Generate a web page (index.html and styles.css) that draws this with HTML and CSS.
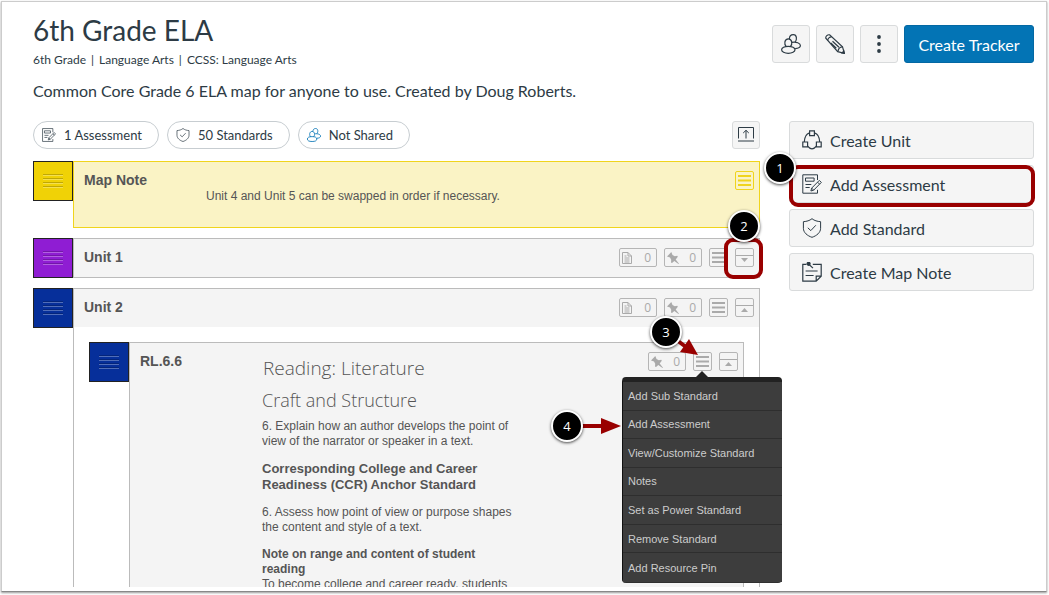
FILE: index.html
```html
<!DOCTYPE html>
<html lang="en">
<head>
  <meta charset="UTF-8" />
  <meta name="viewport" content="width=device-width, initial-scale=1.0"/>
  <title>6th Grade ELA</title>
  <link rel="stylesheet" href="styles.css">
</head>
<body>
  <svg class="sprite" aria-hidden="true">
    <symbol id="i-people" viewBox="0 0 20 20">
      <g fill="none" stroke="currentColor" stroke-width="1.200">
        <ellipse cx="7.300" cy="15.800" rx="6.700" ry="3.500"/>
        <path d="M5.300 12.600C2.800 10.500 3.400 4.900 7.300 4.900s4.500 5.600 2 7.700"/>
        <path d="M8.400 5C8.400 2.400 10 .7 12.300.7c3.800 0 3.900 5.400 1.700 7.400"/>
        <path d="M10.800 8.400c4.500-.8 8.600.8 8.600 3.200 0 1.900-2.200 2.900-5.300 3"/>
      </g>
    </symbol>
    <symbol id="i-pencil" viewBox="0 0 20 20">
      <g fill="none" stroke="currentColor" stroke-width="1.200">
        <path d="M.8 4.200C.5 2.200 2.500.4 4.600.8L17.500 12.700l1.800 6.600-6.600-1.600z"/>
        <path d="M2.800 6.400C2.600 4.600 4.800 2.600 6.600 2.800M13 17.500c.2-2.400 2-4.600 4.500-4.700M7.500 7.200l6.500 6M5.800 9l5.500 5.200"/>
        <path d="M17 19l2.300.3-.5-2.200z" fill="currentColor"/>
      </g>
    </symbol>
    <symbol id="i-dots" viewBox="0 0 20 20">
      <g fill="currentColor"><circle cx="10" cy="3" r="1.900"/><circle cx="10" cy="10" r="1.900"/><circle cx="10" cy="17" r="1.900"/></g>
    </symbol>
    <symbol id="i-assess" viewBox="0 0 20 20">
      <g fill="none" stroke="currentColor">
        <path d="M15.500 6V.8H.8v18.400h14.700v-3.400M3.500 4h8.600v3.200H3.500zM3.500 10.500h5.800M3.500 13.500h4.200"/>
        <path d="M17.300 6.400l2 2-7.600 7.800-2.800.8.800-2.900zM15.600 8.200l2 2M9.700 14.100l2 2.100"/>
      </g>
    </symbol>
    <symbol id="i-shield" viewBox="0 0 20 20">
      <g fill="none" stroke="currentColor">
        <path d="M10 .7c2.500 2 5.200 2.700 8.600 3v6.600c0 4.300-4 7.500-8.600 9-4.600-1.500-8.600-4.700-8.600-9V3.700C4.800 3.400 7.500 2.700 10 .7z"/>
        <path d="M5.800 9.800l3 2.800 5-5.300"/>
      </g>
    </symbol>
    <symbol id="i-unit" viewBox="0 0 20 20">
      <g fill="none" stroke="currentColor" stroke-width="1.200">
        <path d="M7.600.8h4.800v4.800H7.600zM.8 12h4.800v4.800H.8zM14.400 12h4.800v4.800h-4.800z"/>
        <path d="M7.600 2.800C4.500 3.700 2.500 6.500 2.300 12M12.400 2.800c3.100.9 5.100 3.700 5.300 9.200M5.600 16.200c2.800 3.600 6 3.600 8.800 0"/>
      </g>
    </symbol>
    <symbol id="i-note" viewBox="0 0 20 20">
      <g fill="none" stroke="currentColor" stroke-width="1.200">
        <path d="M4.500 2.400H.8v16.800h13.400l5-5V2.400h-8.400M14.200 19.200v-5h5M3.600 9h12M3.600 13.500h8"/>
        <path d="M6 1.500l5 4.600"/><circle cx="6.600" cy="1.800" r="1.500" fill="currentColor"/>
      </g>
    </symbol>
    <symbol id="i-export" viewBox="0 0 16 16">
      <path d="M.5 11.500v-11h15v11M0 14h16M8 11.500V3.500M5.200 6L8 3.300 10.800 6" fill="none" stroke="currentColor"/>
    </symbol>
    <symbol id="i-doc" viewBox="0 0 12 12">
      <path d="M.5.5H6l3.500 3.500v7.500h-9zM6 .5V4h3.500M2.500 4h2M2.500 6h5M2.500 8h5M2.500 10h5" fill="none" stroke="currentColor"/>
    </symbol>
    <symbol id="i-pin" viewBox="0 0 12 12">
      <path d="M4.300 0L5.500 3l2.300 1.200 2.500-.4.500 1L8.700 7.500 12 11.700 11.500 12 7.300 9 5 11l-1-.4.200-2.900L3 5.500 0 4.600z" fill="currentColor"/>
    </symbol>
    <symbol id="i-list" viewBox="0 0 13 13">
      <path d="M0 2h13M0 6.500h13M0 11h13" stroke="currentColor" stroke-width="2"/>
    </symbol>
    <symbol id="i-down" viewBox="0 0 17 17">
      <path d="M0 6.500h17" stroke="currentColor"/><path d="M5 9h7l-3.500 4z" fill="currentColor"/>
    </symbol>
    <symbol id="i-up" viewBox="0 0 17 17">
      <path d="M0 6.500h17" stroke="currentColor"/><path d="M5 13h7L8.500 9z" fill="currentColor"/>
    </symbol>
  </svg>

  <div class="page">
    <header class="header">
      <div>
        <h1>6th Grade ELA</h1>
        <div class="meta"><span>6th Grade</span><span>|</span><span>Language Arts</span><span>|</span><span>CCSS: Language Arts</span></div>
        <p class="description">Common Core Grade 6 ELA map for anyone to use. Created by Doug Roberts.</p>
      </div>
      <div class="actions">
        <button class="btn square" aria-label="Share"><svg><use href="#i-people"/></svg></button>
        <button class="btn square" aria-label="Edit"><svg><use href="#i-pencil"/></svg></button>
        <button class="btn square" aria-label="More options"><svg><use href="#i-dots"/></svg></button>
        <button class="btn primary">Create Tracker</button>
      </div>
    </header>

    <div class="columns">
      <main class="map">
        <div class="summary">
          <button class="pill"><svg><use href="#i-assess"/></svg>1 Assessment</button>
          <button class="pill"><svg><use href="#i-shield"/></svg>50 Standards</button>
          <button class="pill shared"><svg><use href="#i-people"/></svg>Not Shared</button>
          <button class="btn export" aria-label="Collapse all"><svg><use href="#i-export"/></svg></button>
        </div>

        <section class="item note">
          <button class="handle" aria-label="Move Map Note"><i></i><i></i><i></i><i></i></button>
          <div class="box">
            <div class="bar">
              <h2>Map Note</h2>
              <div class="tools"><button class="tool" aria-label="Menu"><svg class="list"><use href="#i-list"/></svg></button></div>
            </div>
            <p class="note-text">Unit 4 and Unit 5 can be swapped in order if necessary.</p>
          </div>
        </section>

        <section class="item purple">
          <button class="handle" aria-label="Move Unit 1"><i></i><i></i><i></i><i></i></button>
          <div class="box">
            <div class="bar">
              <h2>Unit 1</h2>
              <div class="tools">
                <button class="tool count" aria-label="Documents"><svg><use href="#i-doc"/></svg>0</button>
                <button class="tool count" aria-label="Pins"><svg><use href="#i-pin"/></svg>0</button>
                <button class="tool" aria-label="Menu"><svg class="list"><use href="#i-list"/></svg></button>
                <div class="anchor">
                  <button class="tool" aria-label="Expand"><svg class="toggle"><use href="#i-down"/></svg></button>
                  <span class="marker marker-toggle"></span>
                  <span class="step step-2">2</span>
                </div>
              </div>
            </div>
          </div>
        </section>

        <section class="item blue">
          <button class="handle" aria-label="Move Unit 2"><i></i><i></i><i></i><i></i></button>
          <div class="box open">
            <div class="bar">
              <h2>Unit 2</h2>
              <div class="tools">
                <button class="tool count" aria-label="Documents"><svg><use href="#i-doc"/></svg>0</button>
                <button class="tool count" aria-label="Pins"><svg><use href="#i-pin"/></svg>0</button>
                <button class="tool" aria-label="Menu"><svg class="list"><use href="#i-list"/></svg></button>
                <button class="tool" aria-label="Collapse"><svg class="toggle"><use href="#i-up"/></svg></button>
              </div>
            </div>

            <section class="item blue nested">
              <button class="handle" aria-label="Move RL.6.6"><i></i><i></i><i></i><i></i></button>
              <div class="box">
                <div class="bar">
                  <h2>RL.6.6</h2>
                  <div class="tools">
                    <button class="tool count" aria-label="Pins"><svg><use href="#i-pin"/></svg>0</button>
                    <div class="anchor">
                      <button class="tool" aria-label="Menu" aria-expanded="true"><svg class="list"><use href="#i-list"/></svg></button>
                      <div class="menu">
                        <button>Add Sub Standard</button>
                        <button>Add Assessment</button>
                        <button>View/Customize Standard</button>
                        <button>Notes</button>
                        <button>Set as Power Standard</button>
                        <button>Remove Standard</button>
                        <button>Add Resource Pin</button>
                      </div>
                      <svg class="arrow arrow-3" viewBox="0 0 24 20"><path d="M3 3l8 6" stroke="#990000" stroke-width="4"/><path d="M14 1L23 17 5 14z" fill="#990000"/></svg>
                      <span class="step step-3">3</span>
                      <svg class="arrow arrow-4" viewBox="0 0 40 16"><path d="M0 8h22" stroke="#990000" stroke-width="4"/><path d="M20 0l20 8-20 8z" fill="#990000"/></svg>
                      <span class="step step-4">4</span>
                    </div>
                    <button class="tool" aria-label="Collapse"><svg class="toggle"><use href="#i-up"/></svg></button>
                  </div>
                </div>
                <div class="standard">
                  <h3 class="subject">Reading: Literature</h3>
                  <h3>Craft and Structure</h3>
                  <p class="lead">6. Explain how an author develops the point of view of the narrator or speaker in a text.</p>
                  <h4>Corresponding College and Career Readiness (CCR) Anchor Standard</h4>
                  <p>6. Assess how point of view or purpose shapes the content and style of a text.</p>
                  <p><b>Note on range and content of student reading</b><br>To become college and career ready, students</p>
                </div>
              </div>
            </section>
          </div>
        </section>
      </main>

      <aside class="sidebar">
        <button class="btn wide"><svg><use href="#i-unit"/></svg>Create Unit</button>
        <div class="anchor">
          <button class="btn wide"><svg><use href="#i-assess"/></svg>Add Assessment</button>
          <span class="marker marker-side"></span>
          <span class="step step-1">1</span>
        </div>
        <button class="btn wide"><svg><use href="#i-shield"/></svg>Add Standard</button>
        <button class="btn wide"><svg><use href="#i-note"/></svg>Create Map Note</button>
      </aside>
    </div>
  </div>
</body>
</html>
```
FILE: styles.css
```css
* {
  box-sizing: border-box;
}
body {
  margin: 0;
  padding: 1px 2px 3px 1px;
  height: 100vh;
  overflow: hidden;
  background: #fff;
  color: #2d3b45;
  font-family: Lato, sans-serif;
}
button {
  font-family: inherit;
  color: inherit;
  cursor: pointer;
}
h1, h2, h3, h4, p {
  margin: 0;
}
.sprite {
  position: absolute;
  width: 0;
  height: 0;
}
.page {
  height: 100%;
  display: flex;
  flex-direction: column;
  padding: 11px 12px 4px 31px;
  border: 1px solid #ccc;
  border-bottom-color: #888;
  box-shadow: 0 1px 2px #999;
}

/* header */
.header {
  display: flex;
  justify-content: space-between;
  align-items: flex-start;
}
h1 {
  font-size: 28px;
  line-height: 34px;
  font-weight: 400;
}
.meta {
  display: flex;
  gap: 5px;
  margin-top: 4px;
  font-size: 12px;
  line-height: 18px;
}
.description {
  margin-top: 10px;
  font-size: 16px;
  line-height: 24px;
}
.actions {
  display: flex;
  gap: 6px;
  margin-top: 12px;
}
.btn {
  display: flex;
  align-items: center;
  justify-content: center;
  height: 38px;
  padding: 0;
  background: #f5f5f5;
  border: 1px solid #d9dbdc;
  border-radius: 3px;
  font-size: 16px;
}
.btn svg {
  width: 20px;
  height: 20px;
}
.square {
  width: 38px;
}
.primary {
  width: 130px;
  background: #0374b5;
  border-color: #0368a3;
  color: #fff;
}

/* columns */
.columns {
  flex: 1;
  min-height: 0;
  display: flex;
  gap: 29px;
  margin: 0 -12px 0 -31px;
  padding: 18px 12px 0 31px;
  overflow: hidden;
}
.map {
  flex: 1;
}
.sidebar {
  width: 245px;
  display: flex;
  flex-direction: column;
  gap: 6px;
}
.wide {
  width: 100%;
  flex-shrink: 0;
  justify-content: flex-start;
  gap: 8px;
  padding: 0 12px;
}
.summary {
  display: flex;
  gap: 8px;
  margin-bottom: 12px;
}
.pill {
  display: flex;
  align-items: center;
  gap: 8px;
  height: 28px;
  padding: 0 16px 0 8px;
  background: #fff;
  border: 1px solid #c7cdd1;
  border-radius: 14px;
  font-size: 13px;
}
.pill svg {
  width: 14px;
  height: 14px;
}
.shared svg {
  color: #0374b5;
}
.export {
  width: 28px;
  height: 28px;
  margin-left: auto;
}
.export svg {
  width: 16px;
  height: 16px;
}

/* map items */
.item {
  display: flex;
  align-items: flex-start;
  margin-bottom: 10px;
  font-family: "Liberation Sans", Arial, sans-serif;
  color: #555;
}
.handle {
  width: 40px;
  height: 40px;
  padding: 0 9px;
  display: flex;
  flex-direction: column;
  justify-content: center;
  gap: 2px;
  border: 1px solid #222;
}
.handle i {
  height: 2px;
  border-top: 1px solid rgba(0,0,0,0.2);
  border-bottom: 1px solid rgba(255,255,255,0.3);
}
.note .handle {
  background: #f0d206;
}
.purple .handle {
  background: #8f1dd3;
}
.blue .handle {
  background: #062f9a;
}
.box {
  flex: 1;
  min-height: 40px;
  background: #f4f4f4;
  border: 1px solid #bbb;
}
.note .box {
  min-height: 67px;
  background: #faf3c5;
  border-color: #f0d41c;
}
.bar {
  display: flex;
  justify-content: space-between;
  height: 38px;
  padding: 9px 5px 0 10px;
}
h2 {
  font-size: 14px;
  line-height: 19px;
}
.tools {
  display: flex;
  align-items: flex-start;
  gap: 7px;
}
.tool {
  display: flex;
  align-items: center;
  justify-content: center;
  width: 19px;
  height: 19px;
  padding: 0;
  background: none;
  border: 1px solid #b5b5b5;
  border-radius: 2px;
  color: #aaa;
}
.note .tool {
  border-color: #f0d41c;
  color: #f0d41c;
}
.count {
  width: 38px;
  justify-content: space-between;
  padding: 0 5px 0 2px;
  font: 12px "Open Sans", sans-serif;
}
.count svg {
  width: 12px;
  height: 12px;
}
.list {
  width: 13px;
  height: 13px;
}
.toggle {
  width: 17px;
  height: 17px;
}
.note-text {
  margin: -11px 0 0 132px;
  font-size: 12px;
  line-height: 15px;
}
.open {
  background: #fff;
}
.open > .bar {
  background: #f4f4f4;
}
.nested {
  margin: 15px 15px 0;
}
.nested .box {
  height: 400px;
}
.standard {
  width: 254px;
  margin: -29px 0 0 132px;
  font-size: 12px;
  line-height: 15px;
}
.standard h3 {
  font: 300 18px/32px "Open Sans", sans-serif;
}
.standard .subject {
  padding-left: 1px;
  font-size: 19px;
}
.standard .lead {
  margin-top: 3px;
}
.standard h4 {
  margin: 12px 0;
  font-size: 13px;
  line-height: 16px;
}
.standard p + p {
  margin-top: 12px;
}

/* dropdown */
.anchor {
  position: relative;
}
.menu {
  position: absolute;
  top: 25px;
  left: -71px;
  width: 160px;
  height: 206px;
  display: grid;
  grid-auto-rows: 1fr;
  padding-bottom: 1px;
  background: #303030;
  border-top: 5px solid #222;
  border-left: 1px solid #111;
  border-radius: 4px;
}
.menu::before {
  content: "";
  position: absolute;
  top: -11px;
  left: 72px;
  border: 7px solid transparent;
  border-top: 0;
  border-bottom-color: #222;
}
.menu button {
  padding: 0 5px;
  background: #3d3d3d;
  border: 0;
  border-bottom: 1px solid #2e2e2e;
  color: #ccc;
  font-size: 11px;
  font-family: "Liberation Sans", Arial, sans-serif;
  text-align: left;
}
.menu button:last-child {
  border-bottom: 0;
}

/* numbered callouts */
.marker {
  position: absolute;
  border: 4px solid #990000;
  border-radius: 9px;
  pointer-events: none;
}
.marker-side {
  inset: 0 -1px -4px 0;
}
.marker-toggle {
  inset: -10px -9px -12px -11px;
}
.step {
  position: absolute;
  width: 32px;
  height: 32px;
  border: 2px solid #fff;
  border-radius: 50%;
  background: #000;
  box-shadow: 0 1px 3px rgba(0,0,0,0.7);
  color: #fff;
  font: 13px/28px "Open Sans", sans-serif;
  text-align: center;
}
.step-1 {
  top: -13px;
  left: -25px;
}
.step-2 {
  top: -38px;
  left: -7px;
}
.step-3 {
  top: -36px;
  left: -43px;
}
.step-4 {
  top: 58px;
  left: -142px;
}
.arrow {
  position: absolute;
}
.arrow-3 {
  top: -14px;
  left: -18px;
  width: 24px;
  height: 20px;
}
.arrow-4 {
  top: 66px;
  left: -112px;
  width: 40px;
  height: 16px;
}
```
